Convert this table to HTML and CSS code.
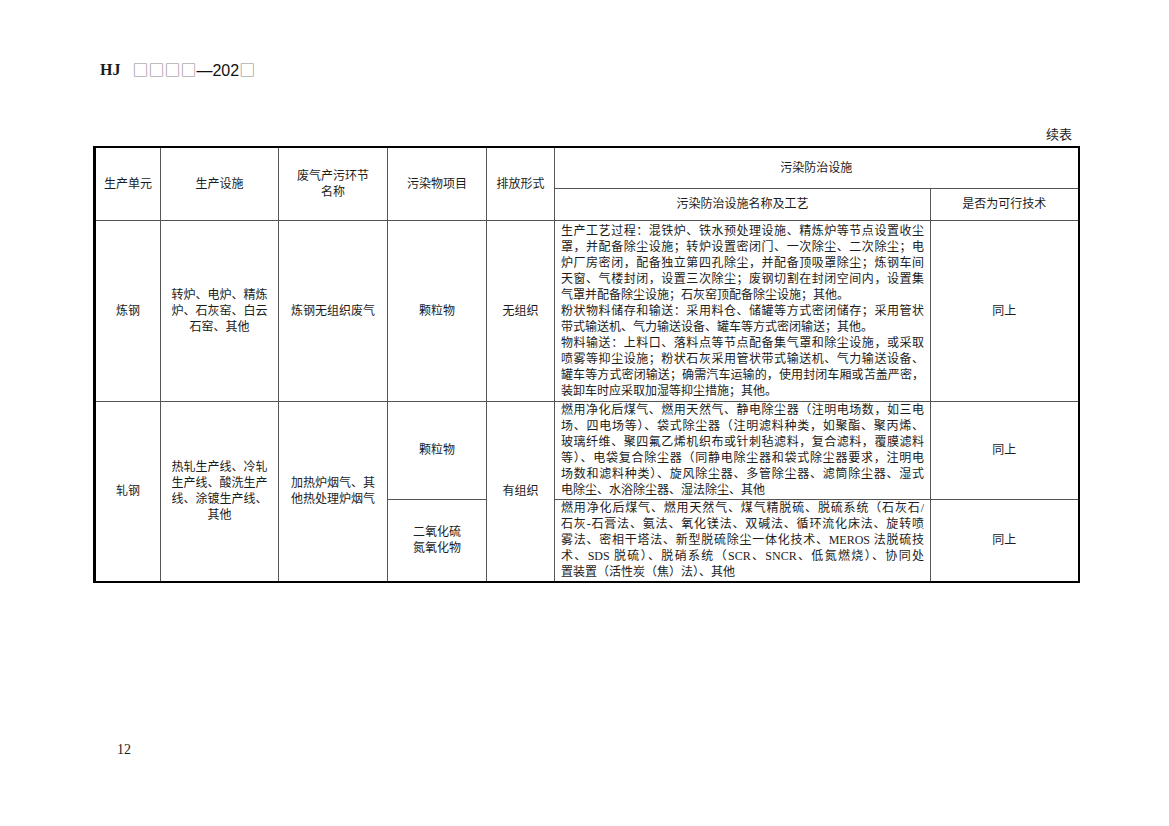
FILE: index.html
```html
<!DOCTYPE html>
<html lang="zh-CN">
<head>
<meta charset="utf-8">
<title>HJ 续表</title>
<link rel="stylesheet" href="styles.css">
</head>
<body>
<div class="page">
  <div class="doc-id">
    <span class="hj">HJ</span>
    <span class="code"><span class="box">□□□□</span>—202<span class="box">□</span></span>
  </div>
  <div class="caption">续表</div>
  <table class="grid">
    <colgroup>
      <col class="c1"><col class="c2"><col class="c3"><col class="c4"><col class="c5"><col class="c6"><col class="c7">
    </colgroup>
    <thead>
      <tr class="h1">
        <th rowspan="2">生产单元</th>
        <th rowspan="2">生产设施</th>
        <th rowspan="2">废气产污环节<br>名称</th>
        <th rowspan="2">污染物项目</th>
        <th rowspan="2">排放形式</th>
        <th colspan="2">污染防治设施</th>
      </tr>
      <tr class="h2">
        <th>污染防治设施名称及工艺</th>
        <th>是否为可行技术</th>
      </tr>
    </thead>
    <tbody>
      <tr class="r1">
        <td>炼钢</td>
        <td>转炉、电炉、精炼<br>炉、石灰窑、白云<br>石窑、其他</td>
        <td>炼钢无组织废气</td>
        <td>颗粒物</td>
        <td>无组织</td>
        <td class="desc">
          <span class="l">生产工艺过程：混铁炉、铁水预处理设施、精炼炉等节点设置收尘</span>
          <span class="l">罩，并配备除尘设施；转炉设置密闭门、一次除尘、二次除尘；电</span>
          <span class="l">炉厂房密闭，配备独立第四孔除尘，并配备顶吸罩除尘；炼钢车间</span>
          <span class="l">天窗、气楼封闭，设置三次除尘；废钢切割在封闭空间内，设置集</span>
          <span class="l e">气罩并配备除尘设施；石灰窑顶配备除尘设施；其他。</span>
          <span class="l">粉状物料储存和输送：采用料仓、储罐等方式密闭储存；采用管状</span>
          <span class="l e">带式输送机、气力输送设备、罐车等方式密闭输送；其他。</span>
          <span class="l">物料输送：上料口、落料点等节点配备集气罩和除尘设施，或采取</span>
          <span class="l">喷雾等抑尘设施；粉状石灰采用管状带式输送机、气力输送设备、</span>
          <span class="l tight">罐车等方式密闭输送；确需汽车运输的，使用封闭车厢或苫盖严密，</span>
          <span class="l e">装卸车时应采取加湿等抑尘措施；其他。</span>
        </td>
        <td>同上</td>
      </tr>
      <tr class="r2">
        <td rowspan="2">轧钢</td>
        <td rowspan="2">热轧生产线、冷轧<br>生产线、酸洗生产<br>线、涂镀生产线、<br>其他</td>
        <td rowspan="2">加热炉烟气、其<br>他热处理炉烟气</td>
        <td>颗粒物</td>
        <td rowspan="2">有组织</td>
        <td class="desc">
          <span class="l">燃用净化后煤气、燃用天然气、静电除尘器（注明电场数，如三电</span>
          <span class="l">场、四电场等）、袋式除尘器（注明滤料种类，如聚酯、聚丙烯、</span>
          <span class="l">玻璃纤维、聚四氟乙烯机织布或针刺毡滤料，复合滤料，覆膜滤料</span>
          <span class="l">等）、电袋复合除尘器（同静电除尘器和袋式除尘器要求，注明电</span>
          <span class="l">场数和滤料种类）、旋风除尘器、多管除尘器、滤筒除尘器、湿式</span>
          <span class="l e">电除尘、水浴除尘器、湿法除尘、其他</span>
        </td>
        <td>同上</td>
      </tr>
      <tr class="r3">
        <td>二氧化硫<br>氮氧化物</td>
        <td class="desc">
          <span class="l">燃用净化后煤气、燃用天然气、煤气精脱硫、脱硫系统（石灰石/</span>
          <span class="l">石灰-石膏法、氨法、氧化镁法、双碱法、循环流化床法、旋转喷</span>
          <span class="l">雾法、密相干塔法、新型脱硫除尘一体化技术、MEROS 法脱硫技</span>
          <span class="l">术、SDS 脱硫）、脱硝系统（SCR、SNCR、低氮燃烧）、协同处</span>
          <span class="l e">置装置（活性炭（焦）法）、其他</span>
        </td>
        <td>同上</td>
      </tr>
    </tbody>
  </table>
  <div class="pageno">12</div>
</div>
</body>
</html>
```

FILE: styles.css
```css
* { box-sizing: border-box; }
html, body { margin: 0; padding: 0; background: #fff; }
body {
  font-family: "Liberation Serif", "Noto Sans CJK SC", serif;
  color: #1c1c1c;
}
.page {
  width: 1169px;
  height: 826px;
  padding: 60px 0 0 93px;
  display: flex;
  flex-direction: column;
}
.doc-id {
  height: 20px;
  line-height: 20px;
  margin-left: 7px;
  display: flex;
  align-items: center;
  gap: 12px;
}
.hj {
  font-family: "Liberation Serif", serif;
  font-weight: bold;
  font-size: 16px;
}
.code {
  font-family: "Liberation Sans", "Noto Sans CJK SC", sans-serif;
  font-size: 16px;
  color: #111;
}
.box {
  font-family: "Noto Sans CJK SC", sans-serif;
  color: #888;
}
.caption {
  width: 984px;
  margin-top: 47px;
  padding-right: 5px;
  text-align: right;
  font-size: 13px;
  line-height: 16px;
}
.grid {
  width: 984px;
  margin-top: 3px;
  border-collapse: collapse;
  table-layout: fixed;
  border: 2px solid #000;
  border-left-width: 3px;
  font-size: 12px;
  line-height: 16px;
}
.c1 { width: 66px; }
.c2 { width: 118px; }
.c3 { width: 109px; }
.c4 { width: 99px; }
.c5 { width: 68px; }
.c6 { width: 376px; }
.c7 { width: 148px; }
.grid th, .grid td {
  border: 1px solid #555;
  padding: 0 6px;
  text-align: center;
  vertical-align: middle;
  font-weight: normal;
}
.h1 { height: 41px; }
.h2 { height: 32px; }
.r1 { height: 181px; }
.r2 { height: 98px; }
.r3 { height: 83px; }
.grid td.desc {
  text-align: justify;
  padding: 0 6px;
}
.l {
  display: block;
  text-align-last: justify;
}
.l.e { text-align-last: left; }
.l.tight { letter-spacing: -0.1px; }
.pageno {
  margin-top: auto;
  margin-left: 24px;
  padding-bottom: 68px;
  font-size: 14px;
  line-height: 16px;
}
```
